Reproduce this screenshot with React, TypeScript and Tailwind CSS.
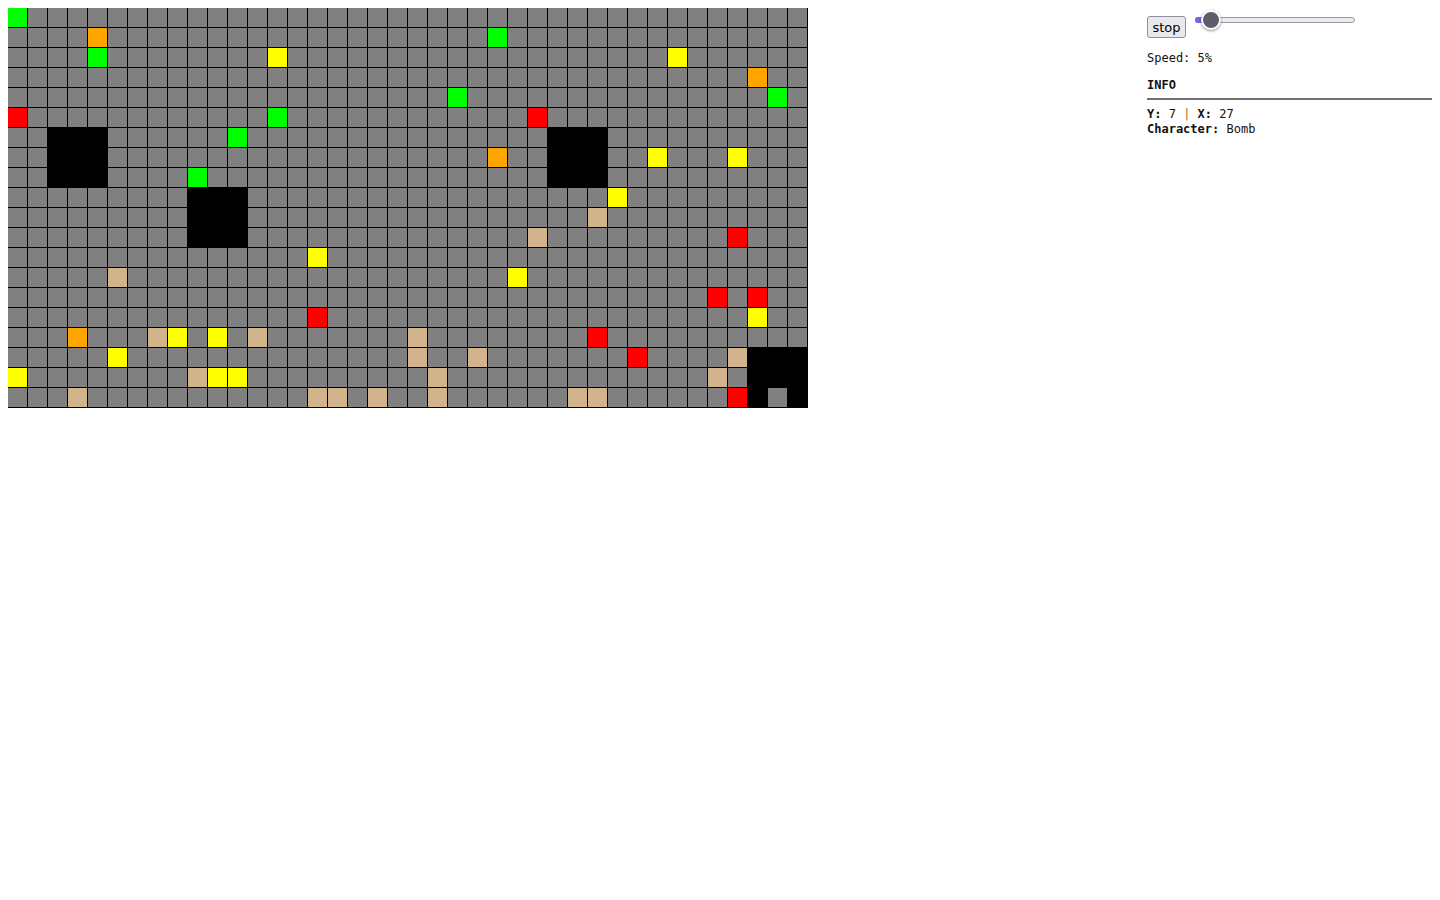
import React from "react";

const COLORS: Record<string, string> = {
  ".": "bg-[#808080]",
  G: "bg-[#00ff00]",
  O: "bg-[#ffa500]",
  Y: "bg-[#ffff00]",
  R: "bg-[#ff0000]",
  T: "bg-[#d2b48c]",
  B: "bg-black",
};

// sparse map of the board: row -> [col, tile]
const tiles: Record<number, [number, string][]> = {
  0: [[0, "G"]],
  1: [[4, "O"], [24, "G"]],
  2: [[4, "G"], [13, "Y"], [33, "Y"]],
  3: [[37, "O"]],
  4: [[22, "G"], [38, "G"]],
  5: [[0, "R"], [13, "G"], [26, "R"]],
  6: [[2, "B"], [3, "B"], [4, "B"], [11, "G"], [27, "B"], [28, "B"], [29, "B"]],
  7: [[2, "B"], [3, "B"], [4, "B"], [24, "O"], [27, "B"], [28, "B"], [29, "B"], [32, "Y"], [36, "Y"]],
  8: [[2, "B"], [3, "B"], [4, "B"], [9, "G"], [27, "B"], [28, "B"], [29, "B"]],
  9: [[9, "B"], [10, "B"], [11, "B"], [30, "Y"]],
  10: [[9, "B"], [10, "B"], [11, "B"], [29, "T"]],
  11: [[9, "B"], [10, "B"], [11, "B"], [26, "T"], [36, "R"]],
  12: [[15, "Y"]],
  13: [[5, "T"], [25, "Y"]],
  14: [[35, "R"], [37, "R"]],
  15: [[15, "R"], [37, "Y"]],
  16: [[3, "O"], [7, "T"], [8, "Y"], [10, "Y"], [12, "T"], [20, "T"], [29, "R"]],
  17: [[5, "Y"], [20, "T"], [23, "T"], [31, "R"], [36, "T"], [37, "B"], [38, "B"], [39, "B"]],
  18: [[0, "Y"], [9, "T"], [10, "Y"], [11, "Y"], [21, "T"], [35, "T"], [37, "B"], [38, "B"], [39, "B"]],
  19: [[3, "T"], [15, "T"], [16, "T"], [18, "T"], [21, "T"], [28, "T"], [29, "T"], [36, "R"], [37, "B"], [39, "B"]],
};

const board: string[][] = Array.from({ length: 20 }, (_, r) => {
  const row = Array(40).fill(".");
  (tiles[r] || []).forEach(([c, t]) => (row[c] = t));
  return row;
});

function App() {
  return (
    <div className="flex justify-between items-start p-2 bg-white min-h-screen">
      <div className="grid grid-cols-[repeat(40,20px)] w-[800px]">
        {board.flat().map((t, i) => (
          <div
            key={i}
            className={`w-5 h-5 border-r border-b border-black ${COLORS[t]}`}
          />
        ))}
      </div>

      <div className="w-[285px] pt-[2px] text-[12px] leading-[15px] text-[#111] font-['DejaVu_Sans_Mono',monospace]">
        <div className="flex items-start">
          <button className="mt-[6px] h-[22px] w-[39px] rounded-[3px] border border-[#8f8f9d] bg-[#e9e9ed] text-[13px] leading-none text-black font-['DejaVu_Sans',sans-serif] pt-[1px]">
            stop
          </button>
          <div className="relative ml-[9px] w-[160px] h-5">
            <div className="absolute left-0 top-[7px] w-full h-[6px] rounded-full border border-[#9a9aa6] bg-[#ececf0]" />
            <div className="absolute left-0 top-[7px] w-[12px] h-[6px] rounded-l-full bg-[#7762e8]" />
            <div className="absolute left-[6px] top-0 w-5 h-5 rounded-full bg-[#5d5d6c] border-2 border-white shadow-[0_1px_3px_rgba(0,0,0,0.45)]" />
          </div>
        </div>

        <div className="mt-[13px]">Speed: 5%</div>

        <div className="mt-3 font-bold">INFO</div>
        <div className="mt-[5px] h-[2px] bg-[#707070]" />

        <div className="mt-[7px]">
          <b>Y:</b> 7 <span className="text-[#c0600c]">|</span> <b>X:</b> 27
        </div>
        <div>
          <b>Character:</b> Bomb
        </div>
      </div>
    </div>
  );
}

export default App;
